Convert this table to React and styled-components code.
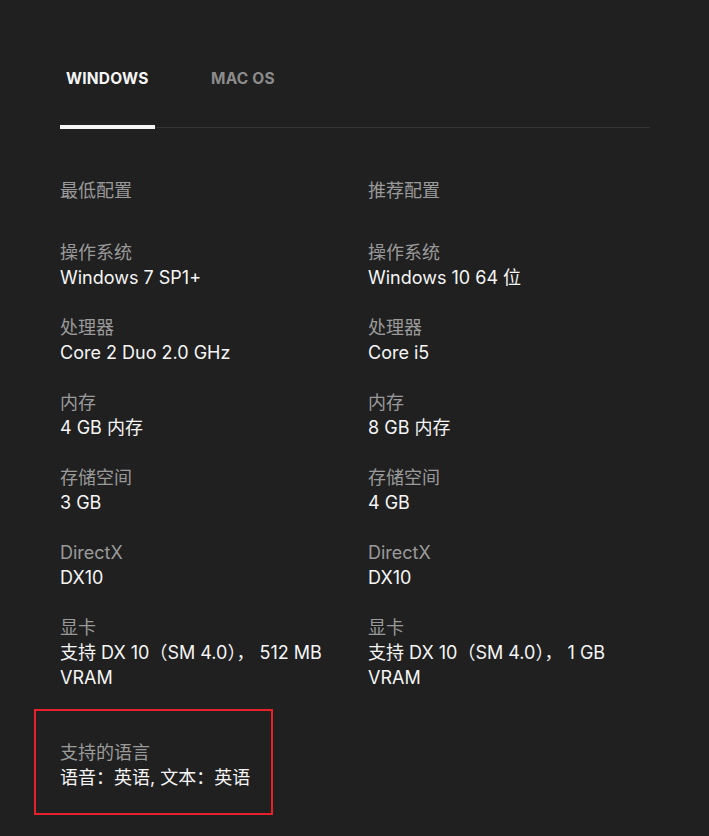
import React from 'react';
import styled, { createGlobalStyle } from 'styled-components';

const GlobalStyle = createGlobalStyle`
  html, body {
    margin: 0;
    padding: 0;
    background: #202020;
  }
  body {
    font-family: Inter, "Noto Sans CJK SC", sans-serif;
    color: #f5f5f5;
  }
`;

const Page = styled.div`
  padding: 66px 59px 20px 60px;
  min-height: 836px;
  box-sizing: border-box;
  background: #202020;
`;

const TabBar = styled.div`
  display: flex;
  border-bottom: 1px solid #343434;
`;

const Tab = styled.div`
  position: relative;
  width: ${(p) => p.width}px;
  padding: 3px 0 0 ${(p) => p.indent}px;
  height: 61px;
  box-sizing: border-box;
  font-size: 15.5px;
  font-weight: 700;
  letter-spacing: 0.2px;
  line-height: 19px;
  color: ${(p) => (p.active ? '#f5f5f5' : '#8c8c8c')};
  &::after {
    content: '';
    display: ${(p) => (p.active ? 'block' : 'none')};
    position: absolute;
    left: 0;
    right: 0;
    bottom: -2px;
    height: 4px;
    background: #f5f5f5;
  }
`;

const Columns = styled.div`
  display: grid;
  grid-template-columns: 282px 282px;
  column-gap: 26px;
  margin-top: 50px;
`;

const Column = styled.div`
  display: flex;
  flex-direction: column;
`;

const Heading = styled.div`
  font-size: 18px;
  line-height: 25px;
  color: #9a9a9a;
  margin-bottom: 37px;
`;

const Item = styled.div`
  margin-bottom: 25px;
`;

const Label = styled.div`
  font-size: 18px;
  line-height: 25px;
  color: #9a9a9a;
`;

const Value = styled.div`
  font-size: 18px;
  line-height: 25px;
  color: #f5f5f5;
`;

const LanguageBox = styled.div`
  margin: -6px 0 0 -26px;
  width: 239px;
  height: 106px;
  box-sizing: border-box;
  border: 2px solid #e8202a;
  padding: 29px 0 0 24px;
`;

const specs = {
  min: [
    ['操作系统', 'Windows 7 SP1+'],
    ['处理器', 'Core 2 Duo 2.0 GHz'],
    ['内存', '4 GB 内存'],
    ['存储空间', '3 GB'],
    ['DirectX', 'DX10'],
    ['显卡', '支持 DX 10（SM 4.0）， 512 MB VRAM'],
  ],
  rec: [
    ['操作系统', 'Windows 10 64 位'],
    ['处理器', 'Core i5'],
    ['内存', '8 GB 内存'],
    ['存储空间', '4 GB'],
    ['DirectX', 'DX10'],
    ['显卡', '支持 DX 10（SM 4.0）， 1 GB VRAM'],
  ],
};

const SpecColumn = ({ title, items }) => (
  <Column>
    <Heading>{title}</Heading>
    {items.map(([label, value]) => (
      <Item key={label}>
        <Label>{label}</Label>
        <Value>{value}</Value>
      </Item>
    ))}
  </Column>
);

const App = () => {
  return (
    <>
      <GlobalStyle />
      <Page>
        <TabBar>
          <Tab active width={95} indent={6}>
            WINDOWS
          </Tab>
          <Tab width={120} indent={56}>
            MAC OS
          </Tab>
        </TabBar>
        <Columns>
          <SpecColumn title="最低配置" items={specs.min} />
          <SpecColumn title="推荐配置" items={specs.rec} />
        </Columns>
        <LanguageBox>
          <Label>支持的语言</Label>
          <Value>语音：英语, 文本：英语</Value>
        </LanguageBox>
      </Page>
    </>
  );
};

export default App;
